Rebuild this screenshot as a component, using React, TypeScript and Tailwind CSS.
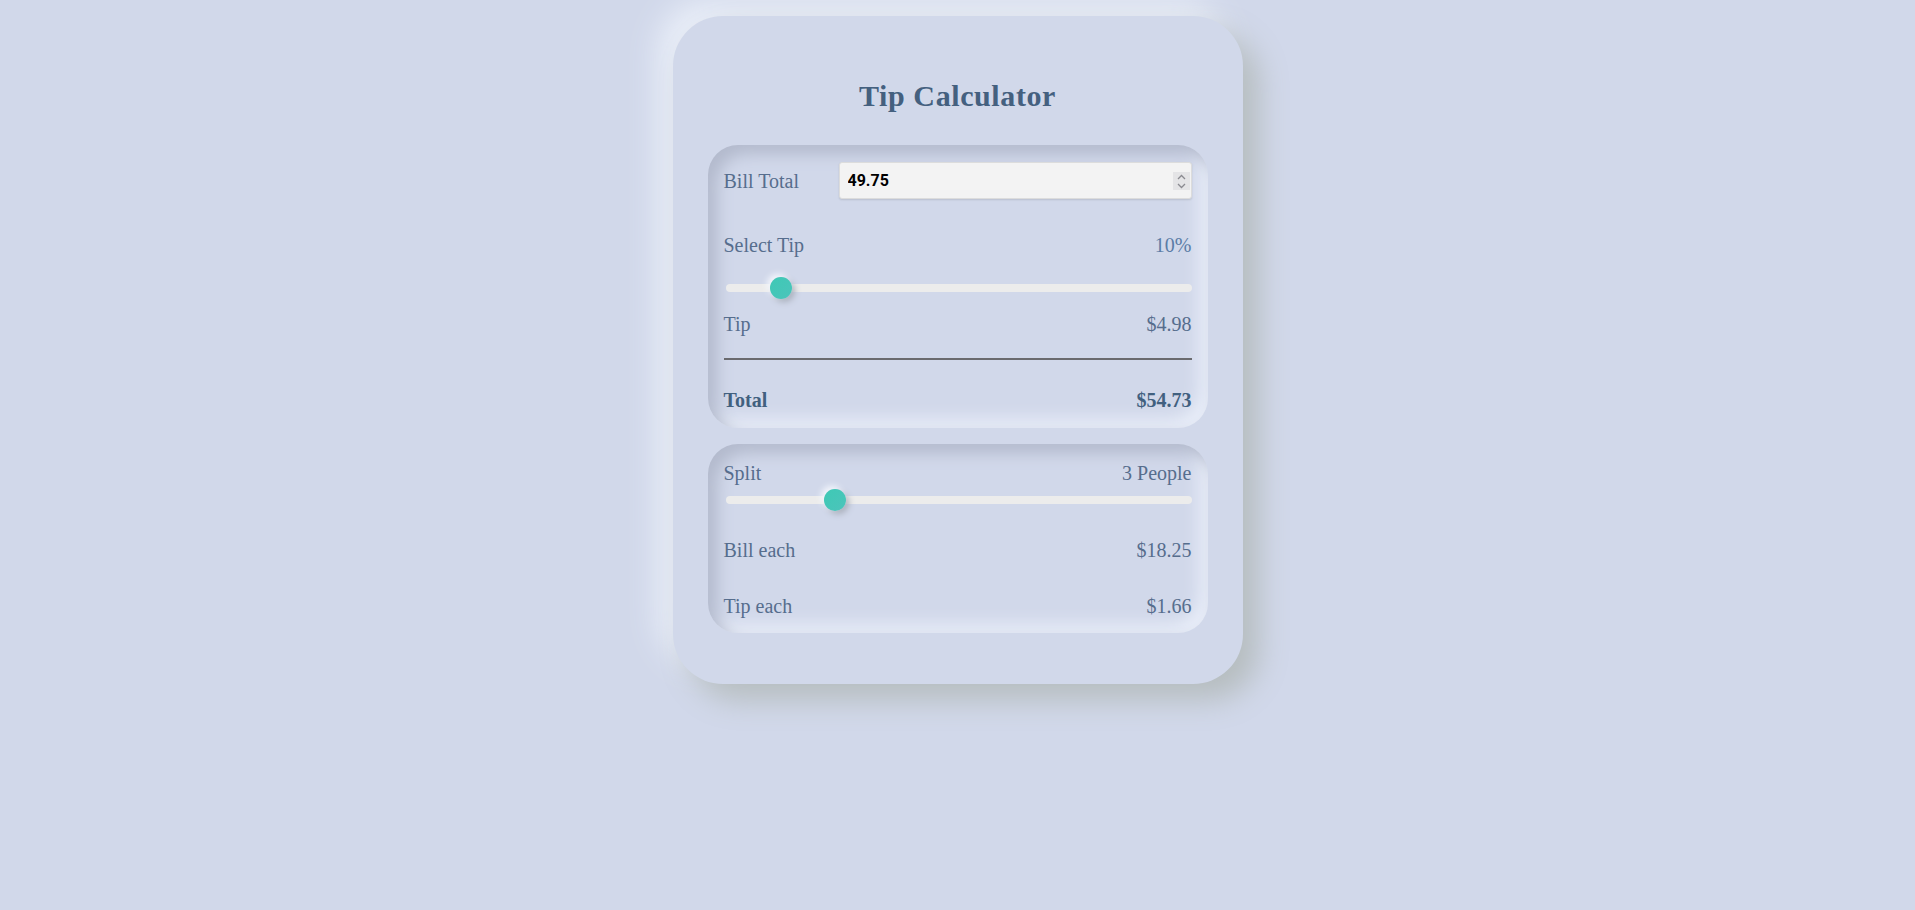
import { useState } from "react";

const serif = "font-['Liberation_Serif',_'DejaVu_Serif',_serif]";

function Row({ label, value, bold }: { label: string; value: string; bold?: boolean }) {
  return (
    <div
      className={`flex h-6 items-center justify-between text-[20px] leading-6 ${
        bold ? "font-bold text-[#41607f]" : "text-[#566d8d]"
      }`}
    >
      <span>{label}</span>
      <span>{value}</span>
    </div>
  );
}

function Slider({
  value,
  min,
  max,
  onChange,
}: {
  value: number;
  min: number;
  max: number;
  onChange: (v: number) => void;
}) {
  return (
    <div className="flex h-[22px] items-center">
      <input
        type="range"
        min={min}
        max={max}
        value={value}
        onChange={(e) => onChange(Number(e.target.value))}
        className="ml-0.5 h-2 w-full cursor-pointer appearance-none rounded-full bg-[#ececec] outline-none [&::-webkit-slider-thumb]:h-[22px] [&::-webkit-slider-thumb]:w-[22px] [&::-webkit-slider-thumb]:appearance-none [&::-webkit-slider-thumb]:rounded-full [&::-webkit-slider-thumb]:bg-[linear-gradient(135deg,#3ec9b5,#4cc4bb)] [&::-webkit-slider-thumb]:shadow-[-3px_-3px_6px_#f4f7fd,3px_3px_6px_#a9afbb]"
      />
    </div>
  );
}

// money values round up to the next cent
const up = (n: number) => Math.ceil(Math.round(n * 1e6) / 1e4) / 100;

function App() {
  const [bill, setBill] = useState("49.75");
  const [tip, setTip] = useState(10);
  const [people, setPeople] = useState(3);

  const billNum = parseFloat(bill) || 0;
  const tipAmount = (billNum * tip) / 100;
  const total = billNum + tipAmount;

  const billEach = up(total / people);
  const tipEach = up(tipAmount / people);

  const step = (d: number) => setBill((Math.max(0, billNum + d)).toFixed(2));

  const panel =
    "rounded-[30px] px-4 shadow-[inset_9px_9px_16px_#b3bacd,inset_-9px_-9px_16px_#e8edf8]";

  return (
    <div className={`min-h-screen bg-[#d1d8ea] pt-4 ${serif}`}>
      <div className="mx-auto w-[570px] rounded-[50px] bg-[#d1d8ea] px-[35px] pt-[62px] pb-[51px] shadow-[16px_16px_30px_#b6bdbf,-16px_-16px_30px_#e9eef8]">
        <h1 className="h-9 text-center text-[30px] leading-9 font-bold tracking-[0.6px] text-[#44607f]">
          Tip Calculator
        </h1>

        {/* Bill + tip */}
        <div className={`mt-[31px] pt-[17px] pb-4 ${panel}`}>
          <div className="flex h-[37px] items-center">
            <span className="w-[115px] text-[20px] text-[#566d8d]">Bill Total</span>
            <div className="relative flex-1">
              <input
                type="number"
                value={bill}
                onChange={(e) => setBill(e.target.value)}
                className="h-[37px] w-full appearance-none rounded-[3px] border border-[#dcdcdc] bg-[#f3f3f3] pr-6 pl-2 font-['Roboto',_sans-serif] text-[16px] font-bold text-black shadow-[0_1px_2px_rgba(0,0,0,0.12)] outline-none [&::-webkit-inner-spin-button]:appearance-none [&::-webkit-outer-spin-button]:appearance-none"
              />
              <div className="absolute top-[10px] right-[2px] flex h-[18px] w-[17px] flex-col items-center justify-center bg-[#e4e4e6]">
                <button onClick={() => step(1)} className="flex h-2 items-center">
                  <svg width="9" height="6" viewBox="0 0 9 6" fill="none" stroke="#8a8a90" strokeWidth="1.3">
                    <path d="M1 5 L4.5 1.5 L8 5" />
                  </svg>
                </button>
                <button onClick={() => step(-1)} className="mt-px flex h-2 items-center">
                  <svg width="9" height="6" viewBox="0 0 9 6" fill="none" stroke="#8a8a90" strokeWidth="1.3">
                    <path d="M1 1 L4.5 4.5 L8 1" />
                  </svg>
                </button>
              </div>
            </div>
          </div>

          <div className="mt-[34px] flex h-6 items-center justify-between text-[20px] leading-6 text-[#566d8d]">
            <span>Select Tip</span>
            <span className="text-[#5b7ca6]">{tip}%</span>
          </div>

          <div className="mt-5">
            <Slider value={tip} min={0} max={100} onChange={setTip} />
          </div>

          <div className="mt-[13px]">
            <Row label="Tip" value={`$${up(tipAmount).toFixed(2)}`} />
          </div>

          <div className="mt-[22px] h-[2px] bg-[#6a6a6e]" />

          <div className="mt-[28px]">
            <Row label="Total" value={`$${up(total).toFixed(2)}`} bold />
          </div>
        </div>

        {/* Split */}
        <div className={`mt-4 pt-[17px] pb-[15px] ${panel}`}>
          <Row label="Split" value={`${people} People`} />
          <div className="mt-1">
            <Slider value={people} min={1} max={10} onChange={setPeople} />
          </div>
          <div className="mt-[27px]">
            <Row label="Bill each" value={`$${billEach.toFixed(2)}`} />
          </div>
          <div className="mt-8">
            <Row label="Tip each" value={`$${tipEach.toFixed(2)}`} />
          </div>
        </div>
      </div>
    </div>
  );
}

export default App;
